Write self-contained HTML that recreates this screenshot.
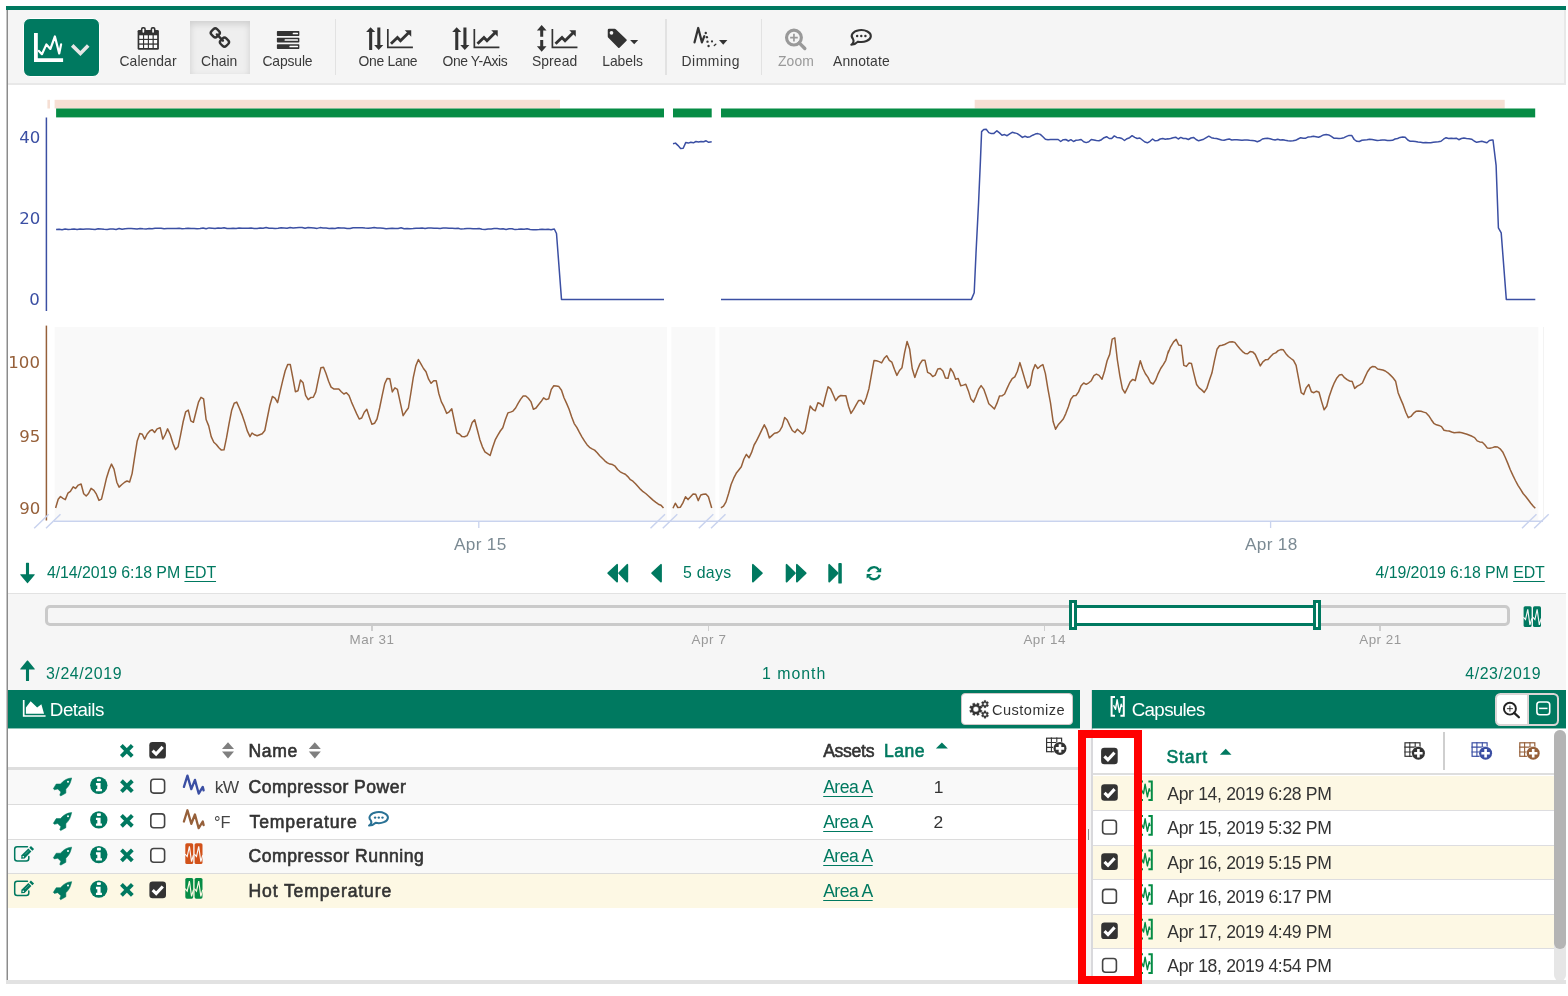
<!DOCTYPE html>
<html lang="en"><head><meta charset="utf-8"><title>Workbench</title><style>
html,body{margin:0;padding:0;background:#fff;}
body{width:1568px;height:996px;position:relative;overflow:hidden;font-family:"Liberation Sans",Arial,sans-serif;}
#app div,#app svg,#app .t{position:absolute;box-sizing:border-box;}
#app svg{overflow:visible;}
#app{will-change:transform;}
.t{white-space:pre;}
u{text-decoration-thickness:1.3px;text-underline-offset:2.5px;}
</style></head>
<body><div id="app" style="left:0;top:0;width:1568px;height:996px">
<div style="left:6px;top:6px;width:1560px;height:4px;background:#007960"></div>
<div style="left:6px;top:10px;width:1px;height:970px;background:#c6c6c6"></div>
<div style="left:7px;top:10px;width:1px;height:971px;background:#8c8c8c"></div>
<div style="left:8px;top:10px;width:1558px;height:74.5px;background:#f5f5f5;border-bottom:2px solid #e8e8e8;border-right:2px solid #e8e8e8"></div>
<div style="left:23.3px;top:17.9px;width:77px;height:59px;background:#007960;border-radius:7px;border:1px solid #fff"></div>
<svg style="left:24px;top:19px;" width="76" height="57" viewBox="24 19 76 57"><path d="M34 33.1V62H63.1V58.2H37.8V33.1Z" fill="#fff"/><polyline points="38.9,50.9 41.9,54.2 46.4,44.4 50.4,48.9 54.9,36.5 59.2,53.5 61.1,44.4" stroke="#fff" stroke-width="2.2" fill="none" stroke-linejoin="round" stroke-linecap="round"/><polyline points="72.2,45.4 80.4,53.5 88.2,45.4" stroke="#e6e6e6" stroke-width="3.6" fill="none"/></svg>
<div style="left:190px;top:21px;width:59.5px;height:52.5px;background:#efefef;box-shadow:inset 0 3px 7px rgba(0,0,0,.14);"></div>
<div style="left:334.75px;top:19px;width:1.5px;height:56px;background:#e2e2e2"></div>
<div style="left:665.05px;top:19px;width:1.5px;height:56px;background:#e2e2e2"></div>
<div style="left:760.65px;top:19px;width:1.5px;height:56px;background:#e2e2e2"></div>
<svg style="left:100px;top:15px;" width="800" height="60" viewBox="100 15 800 60"><g transform="translate(125 20) scale(0.07651)"><rect x="165" y="130" width="278" height="260" rx="18" fill="#333"/><rect x="187" y="200" width="48" height="46" fill="#fff"/><rect x="187" y="261" width="48" height="45" fill="#fff"/><rect x="187" y="323" width="48" height="43" fill="#fff"/><rect x="250" y="200" width="48" height="46" fill="#fff"/><rect x="250" y="261" width="48" height="45" fill="#fff"/><rect x="250" y="323" width="48" height="43" fill="#fff"/><rect x="313" y="200" width="47" height="46" fill="#fff"/><rect x="313" y="261" width="47" height="45" fill="#fff"/><rect x="313" y="323" width="47" height="43" fill="#fff"/><rect x="376" y="200" width="44" height="46" fill="#fff"/><rect x="376" y="261" width="44" height="45" fill="#fff"/><rect x="376" y="323" width="44" height="43" fill="#fff"/><rect x="208" y="90" width="64" height="90" rx="26" fill="#333"/><rect x="229" y="112" width="22" height="56" rx="10" fill="#fff"/><rect x="335" y="90" width="64" height="90" rx="26" fill="#333"/><rect x="356" y="112" width="22" height="56" rx="10" fill="#fff"/></g><g transform="translate(125 20) scale(0.07651)"><rect x="1129" y="117" width="102" height="102" rx="33" transform="rotate(45 1180 168)" fill="none" stroke="#333" stroke-width="31"/><rect x="1249" y="239" width="102" height="102" rx="33" transform="rotate(45 1300 290)" fill="none" stroke="#333" stroke-width="31"/><path d="M1200 188L1280 270" stroke="#333" stroke-width="31" stroke-linecap="round"/></g><g transform="translate(270 15) scale(0.05102)"><rect x="135" y="315" width="440" height="95" rx="14" fill="#333"/><rect x="445" y="347.5" width="105" height="30" rx="12" fill="#fff"/><rect x="135" y="445" width="440" height="92" rx="14" fill="#333"/><rect x="285" y="476.0" width="265" height="30" rx="12" fill="#fff"/><rect x="135" y="572" width="440" height="93" rx="14" fill="#333"/><rect x="380" y="603.5" width="170" height="30" rx="12" fill="#fff"/></g><g transform="translate(355 15) scale(0.05102)"><path d="M305 238L396 332H337V685H277V332H218Z" fill="#333"/><path d="M437 245H497V590H555L465 687L376 590H437Z" fill="#333"/></g><g transform="translate(355 15) scale(0.05102)"><path d="M627 272H660V618H1135V650H627Z" fill="#333"/><polyline points="705,565 832,440 892,505 1045,352" stroke="#333" stroke-width="56" fill="none"/><path d="M975 298H1102V425L1060 380Z" fill="#333"/></g><g transform="translate(441.1 15) scale(0.05102)"><path d="M305 238L396 332H337V685H277V332H218Z" fill="#333"/><path d="M437 245H497V590H555L465 687L376 590H437Z" fill="#333"/></g><g transform="translate(441.5 15) scale(0.05102)"><path d="M627 272H660V618H1135V650H627Z" fill="#333"/><polyline points="705,565 832,440 892,505 1045,352" stroke="#333" stroke-width="56" fill="none"/><path d="M975 298H1102V425L1060 380Z" fill="#333"/></g><g transform="translate(525 15) scale(0.05102)"><path d="M327 198L422 302H357V428H298V302H233Z" fill="#333"/><path d="M298 490H357V613H422L327 722L233 613H298Z" fill="#333"/></g><g transform="translate(519.55 15) scale(0.05102)"><path d="M627 272H660V618H1135V650H627Z" fill="#333"/><polyline points="705,565 832,440 892,505 1045,352" stroke="#333" stroke-width="56" fill="none"/><path d="M975 298H1102V425L1060 380Z" fill="#333"/></g><g transform="translate(595 15) scale(0.05102)"><path d="M250 295a25 25 0 0 1 25 -25H385a40 40 0 0 1 28 12L618 480a18 18 0 0 1 0 25L480 640a18 18 0 0 1 -25 0L262 447a40 40 0 0 1 -12 -28Z" fill="#333"/><circle cx="323" cy="350" r="36" fill="#f5f5f5"/><path d="M688 490H847L768 572Z" fill="#333"/></g><g transform="translate(675 15) scale(0.05102)"><polyline points="383,535 455,255 527,535 575,415" stroke="#333" stroke-width="44" fill="none" stroke-linecap="round" stroke-linejoin="round"/><circle cx="603" cy="352" r="23" fill="#333"/><circle cx="625" cy="435" r="23" fill="#333"/><circle cx="637" cy="523" r="23" fill="#333"/><circle cx="658" cy="607" r="23" fill="#333"/><circle cx="725" cy="518" r="21" fill="#333"/><path d="M770 598L800 572" stroke="#333" stroke-width="26" stroke-linecap="round"/><path d="M863 492H1027L945 582Z" fill="#333"/></g><g transform="translate(770 15) scale(0.07651)"><circle cx="313" cy="295" r="97" fill="none" stroke="#999" stroke-width="41"/><path d="M382 364L455 437" stroke="#999" stroke-width="44" stroke-linecap="round"/><path d="M263 295H363M313 245V345" stroke="#999" stroke-width="22"/></g><g transform="translate(770 15) scale(0.07651)"><path d="M1150.2 348.3A125 78 0 1 0 1084.7 314.0Q1107.2 357.7 1061.8 388.9Q1120.2 383.4 1150.2 348.3Z" fill="none" stroke="#333" stroke-width="27" stroke-linejoin="round"/><circle cx="1139" cy="275" r="16" fill="#333"/><circle cx="1193" cy="275" r="16" fill="#333"/><circle cx="1247" cy="275" r="16" fill="#333"/></g></svg>
<span class="t" style="left:119.40px;top:55px;font-size:13.9px;line-height:13.9px;color:#3a3a3a;letter-spacing:0.114px;">Calendar</span>
<span class="t" style="left:201.00px;top:55px;font-size:13.9px;line-height:13.9px;color:#3a3a3a;">Chain</span>
<span class="t" style="left:262.40px;top:55px;font-size:13.9px;line-height:13.9px;color:#3a3a3a;letter-spacing:-0.133px;">Capsule</span>
<span class="t" style="left:358.45px;top:55px;font-size:13.9px;line-height:13.9px;color:#3a3a3a;letter-spacing:-0.271px;">One Lane</span>
<span class="t" style="left:442.55px;top:55px;font-size:13.9px;line-height:13.9px;color:#3a3a3a;letter-spacing:-0.389px;">One Y-Axis</span>
<span class="t" style="left:531.90px;top:55px;font-size:13.9px;line-height:13.9px;color:#3a3a3a;letter-spacing:0.120px;">Spread</span>
<span class="t" style="left:602.30px;top:55px;font-size:13.9px;line-height:13.9px;color:#3a3a3a;letter-spacing:-0.080px;">Labels</span>
<span class="t" style="left:681.40px;top:55px;font-size:13.9px;line-height:13.9px;color:#3a3a3a;letter-spacing:0.567px;">Dimming</span>
<span class="t" style="left:778.00px;top:55px;font-size:13.9px;line-height:13.9px;color:#999;letter-spacing:0.133px;">Zoom</span>
<span class="t" style="left:833.00px;top:55px;font-size:13.9px;line-height:13.9px;color:#3a3a3a;letter-spacing:0.143px;">Annotate</span>
<svg style="left:8px;top:90px;" width="1558" height="450" viewBox="8 90 1558 450"><rect x="47.4" y="99.8" width="2.6" height="8.7" fill="#f6dfd4"/><rect x="54.6" y="99.8" width="505.4" height="8.7" fill="#f6dfd4"/><rect x="974.7" y="99.8" width="530" height="8.7" fill="#f6dfd4"/><rect x="56.1" y="108.5" width="607.9" height="8.9" fill="#068c45"/><rect x="673" y="108.5" width="38.7" height="8.9" fill="#068c45"/><rect x="721" y="108.5" width="814.2" height="8.9" fill="#068c45"/><rect x="54.6" y="327" width="612.4" height="193.3" fill="#f9f9f9"/><rect x="671.4" y="327" width="43.9" height="193.3" fill="#f9f9f9"/><rect x="719.4" y="327" width="819" height="193.3" fill="#f9f9f9"/><rect x="1543" y="327" width="1" height="193" fill="#f3f3f3"/><path d="M46.4 117.5V311" stroke="#3b4fa3" stroke-width="1.5"/><path d="M46.4 325.6V520.5" stroke="#96603a" stroke-width="1.5"/><path d="M54 521.3H1543" stroke="#c9d3ee" stroke-width="1.5"/><path d="M478.8 521V528M1270.6 521V528" stroke="#c9d3ee" stroke-width="1.3"/><path d="M34.2 528.2L48.7 514.2" stroke="#c9d3ee" stroke-width="1.5"/><path d="M46.0 528.2L60.5 514.2" stroke="#c9d3ee" stroke-width="1.5"/><path d="M650.5 528.2L665.0 514.2" stroke="#c9d3ee" stroke-width="1.5"/><path d="M662.8 528.2L677.3 514.2" stroke="#c9d3ee" stroke-width="1.5"/><path d="M698.8 528.2L713.3 514.2" stroke="#c9d3ee" stroke-width="1.5"/><path d="M711 528.2L725.5 514.2" stroke="#c9d3ee" stroke-width="1.5"/><path d="M1522 528.2L1536.5 514.2" stroke="#c9d3ee" stroke-width="1.5"/><path d="M1534.2 528.2L1548.7 514.2" stroke="#c9d3ee" stroke-width="1.5"/><path d="M56.1 229.4 L59.1 229.2 L62.1 229.7 L65.1 229.1 L68.1 229.5 L71.1 229.3 L74.1 229 L77.1 229.4 L80.1 228.9 L83.1 229.3 L86.1 228.9 L89.1 228.9 L92.1 229.2 L95.1 229.5 L98.1 228.8 L101.1 228.9 L104.1 229.3 L107.1 229.5 L110.1 229.1 L113.1 228.9 L116.1 229.5 L119.1 228.5 L122.1 229.3 L125.1 228.7 L128.1 228.5 L131.1 228.5 L134.1 228.7 L137.1 229.1 L140.1 228.5 L143.1 228.8 L146.1 228.9 L149.1 228.6 L152.1 228.7 L155.1 228.2 L158.1 228.2 L161.1 228.3 L164.1 228.8 L167.1 228.5 L170.1 228.4 L173.1 228.6 L176.1 228.5 L179.1 228.3 L182.1 228.8 L185.1 228.6 L188.1 228.2 L191.1 228.5 L194.1 228.4 L197.1 228.7 L200.1 228.6 L203.1 228.1 L206.1 228.8 L209.1 227.9 L212.1 228.2 L215.1 228.5 L218.1 227.9 L221.1 228.2 L224.1 227.7 L227.1 228.4 L230.1 228.4 L233.1 228.2 L236.1 228.5 L239.1 228 L242.1 228.3 L245.1 228.2 L248.1 228.2 L251.1 228.1 L254.1 228.4 L257.1 228.5 L260.1 228 L263.1 228.2 L266.1 227.6 L269.1 228.2 L272.1 228.2 L275.1 228.5 L278.1 228.3 L281.1 227.8 L284.1 227.9 L287.1 228.2 L290.1 227.5 L293.1 228 L296.1 227.7 L299.1 227.6 L302.1 227.6 L305.1 228.3 L308.1 227.6 L311.1 227.7 L314.1 227.9 L317.1 228.4 L320.1 227.6 L323.1 228 L326.1 228.1 L329.1 228.4 L332.1 228.3 L335.1 228.4 L338.1 227.8 L341.1 228 L344.1 227.9 L347.1 228.4 L350.1 228.5 L353.1 227.7 L356.1 227.8 L359.1 227.8 L362.1 227.8 L365.1 228.1 L368.1 228.2 L371.1 227.9 L374.1 227.6 L377.1 228.1 L380.1 228 L383.1 228.3 L386.1 228.7 L389.1 228.4 L392.1 228.2 L395.1 228.4 L398.1 228.4 L401.1 227.8 L404.1 228.7 L407.1 228.6 L410.1 228.7 L413.1 228.6 L416.1 228.3 L419.1 228.3 L422.1 228 L425.1 228.6 L428.1 228 L431.1 228 L434.1 228.2 L437.1 228.2 L440.1 228.4 L443.1 228.1 L446.1 228.1 L449.1 228.3 L452.1 228.2 L455.1 228.5 L458.1 228.2 L461.1 229.1 L464.1 228.8 L467.1 228.4 L470.1 228.5 L473.1 228.7 L476.1 228.7 L479.1 228.5 L482.1 229.2 L485.1 229.4 L488.1 228.9 L491.1 228.9 L494.1 228.6 L497.1 228.6 L500.1 228.9 L503.1 228.8 L506.1 229.4 L509.1 228.8 L512.1 228.7 L515.1 229.6 L518.1 229.3 L521.1 228.9 L524.1 229.3 L527.1 228.8 L530.1 229.4 L533.1 229.8 L536.1 229.8 L539.1 229.6 L542.1 229.2 L545.1 229.4 L548.1 229.2 L551.1 229.8 L554.3 229 L556.5 233.5 L561.5 299.4 L664 299.4" fill="none" stroke="#3b4fa3" stroke-width="1.5" stroke-linejoin="round"/><path d="M673 143.8 L675.5 143.1 L678.1 145.6 L680.6 148.4 L683.2 148.2 L685.7 142.6 L688.3 143.1 L690.8 142.3 L693.4 142.8 L695.9 141.5 L698.5 142 L701 141.5 L703.6 141.8 L706.1 140.8 L708.7 142.3 L711.7 141.8" fill="none" stroke="#3b4fa3" stroke-width="1.5" stroke-linejoin="round"/><path d="M721 299.4 L971.4 299.4 L974.2 292.8 L976 253.3 L978.6 202.2 L980.4 161.4 L981.6 131.6 L983.7 129.5 L986.2 129.3 L988.8 132.6 L991.3 133.6 L993.9 133.4 L996.9 130.8 L999.5 132.9 L1002 135.2 L1004.6 134.6 L1007.1 135.7 L1009.7 133.9 L1012.2 132.3 L1014.8 132.9 L1017.3 133.6 L1019.9 135.4 L1022.4 137.4 L1025 136.2 L1027.6 137.2 L1030.1 136.7 L1032.7 135.2 L1035.2 134.1 L1037.8 133.6 L1040.3 134.4 L1042.9 136.7 L1045.4 139.2 L1048 139.7 L1050.5 139.5 L1053.1 139.5 L1055.6 139.5 L1058.2 139.5 L1060.7 141.5 L1063.3 139.7 L1065.8 139.5 L1068.4 141 L1070.9 139.7 L1073.5 141.5 L1076 140.3 L1078.6 140 L1081.1 139.5 L1083.7 141.8 L1086.2 142.6 L1088.8 141.8 L1091.3 139.5 L1093.9 140 L1096.4 140.5 L1099 140.8 L1101.5 139.7 L1104.1 137.7 L1106.6 136.7 L1109.2 138.5 L1111.7 138.5 L1114.3 135.9 L1116.8 137.4 L1119.4 137.7 L1121.9 138.5 L1124.5 140.5 L1127 138.7 L1129.6 137.7 L1132.1 135.7 L1134.7 137.4 L1137.2 138.5 L1139.8 138 L1142.3 140 L1144.9 142 L1147.4 142.8 L1150 141.3 L1152.6 139 L1155.1 140.8 L1157.7 140.5 L1160.2 139 L1162.8 138.5 L1165.3 139.2 L1167.9 138.7 L1168 139 L1170.6 138.5 L1173.1 137.7 L1175.7 137.2 L1178.2 139 L1180.8 137.4 L1183.3 138.5 L1185.9 138.5 L1188.4 139.5 L1191 138 L1193.5 137.4 L1196.1 139.5 L1198.6 140.8 L1201.2 140 L1203.7 139.2 L1206.3 137.7 L1208.8 136.2 L1211.4 137.7 L1213.9 138.2 L1216.5 138.5 L1219 139.2 L1221.6 140 L1224.1 140.3 L1226.7 139.5 L1229.2 139 L1231.8 140 L1234.3 139.7 L1236.9 139.7 L1239.4 140 L1242 140.3 L1244.5 140 L1247.1 140 L1249.6 140.3 L1252.2 140.5 L1254.7 140.8 L1257.3 141.8 L1259.8 140.8 L1262.4 139 L1264.9 138.5 L1267.5 138.2 L1270 138.7 L1272.6 139.5 L1275.1 140 L1277.7 139.2 L1280.2 140 L1282.8 139.7 L1285.3 140.3 L1287.9 140.8 L1290.4 141 L1293 140.8 L1295.6 140.3 L1298.1 139 L1300.7 137.7 L1303.2 138.2 L1305.8 138.2 L1308.3 136.9 L1310.9 136.7 L1313.4 136.2 L1316 136.7 L1318.5 137.2 L1321.1 136.2 L1323.6 134.9 L1326.2 134.6 L1328.7 134.9 L1331.3 136.4 L1333.8 138.2 L1336.4 138.2 L1338.9 138.5 L1341.5 138.2 L1344 137.7 L1346.6 136.4 L1349.1 135.4 L1351.7 135.4 L1354.2 139.5 L1356.8 141.3 L1359.3 141.5 L1361.9 140.3 L1364.4 140 L1367 139.7 L1369.5 139.2 L1372.1 139.5 L1374.6 140 L1377.2 140.5 L1379.7 140.3 L1382.3 140 L1384.8 140 L1387.4 140.5 L1389.9 140.5 L1392.5 140.3 L1395 139 L1397.6 138.5 L1400.1 137.4 L1402.7 136.9 L1405.2 137.2 L1407.8 140 L1410.3 141.3 L1412.9 141.3 L1415.4 141.5 L1418 142 L1420.6 142.3 L1423.1 142.8 L1425.7 142.6 L1428.2 142.8 L1430.8 142.8 L1433.3 142.3 L1435.9 142 L1438.4 141.8 L1441 141.3 L1443.5 139.2 L1446.1 137.7 L1448.6 138.5 L1451.2 138.2 L1453.7 138.5 L1456.3 138.2 L1458.8 139.7 L1461.4 138.5 L1463.9 138 L1466.5 138.5 L1469 138.7 L1471.6 139.2 L1474.1 141 L1476.7 142.3 L1479.2 141.8 L1481.8 141.3 L1484.3 142 L1486.9 142.8 L1489.4 140.5 L1492 140 L1493 140 L1496.1 165.3 L1498.4 227.8 L1501.2 232.9 L1506.3 299.4 L1535.3 299.4" fill="none" stroke="#3b4fa3" stroke-width="1.5" stroke-linejoin="round"/><path d="M55.6 508 L58.2 499.3 L60.5 496.5 L63 498.3 L65.3 499.6 L67.9 493.2 L70.4 491.4 L73.2 486.8 L75.5 488.4 L78.3 485.1 L81.1 484 L83.7 493.7 L86.2 496 L88.5 493.5 L91.1 488.4 L93.9 490.4 L96.4 494.2 L99 500.4 L101.5 499.1 L104.1 488.4 L106.6 477.7 L109.2 469.5 L111.5 464.1 L114 469.2 L116.8 482.2 L119.1 487.1 L121.9 484.5 L125 482 L127 481 L129.6 482 L132.1 473.6 L134.7 456.7 L137.2 440.9 L139.8 433.5 L142.3 434.3 L144.6 439.1 L147.2 434 L150 430.7 L152.3 429.7 L154.6 432.5 L157.1 428.9 L160.2 427.7 L162.8 439.1 L165.3 434.5 L167.6 428.9 L170.2 434.5 L173 443.5 L175.5 449.6 L178.1 446.8 L180.6 434.8 L183.2 421.5 L185.7 411.8 L188.3 410.1 L190.8 420.8 L193.4 422.3 L195.9 412.3 L198.5 402.1 L201 397.3 L203.6 398.8 L206.1 419.5 L208.7 425.9 L211.2 436.6 L213.8 442.2 L216.3 444.5 L218.9 447.8 L221.4 450.1 L224 449.8 L226.5 437.9 L229.1 423.3 L231.6 410.6 L234.2 403.2 L236.7 402.1 L239.3 408 L242.3 415.4 L244.9 423.1 L247.4 431.2 L250 436.6 L252 433 L254.6 434.8 L257.1 435.8 L259.7 434.8 L262.2 433.8 L264.8 430.5 L267.3 418 L269.9 405.2 L272.4 396.5 L275 398.1 L277.6 402.7 L280.1 391.7 L282.7 380.7 L285.2 370.8 L287.8 364.4 L290.3 364.6 L292.9 378.2 L295.4 391.7 L298 390.7 L300.5 379.9 L303.1 382.8 L305.6 395.3 L308.2 399.6 L310.7 397.6 L313.3 397.3 L315.8 391.9 L318.4 379.2 L320.9 367.7 L323.5 367.2 L326 373.6 L328.6 381.2 L331.1 387.1 L333.7 388.9 L336.2 389.1 L338.8 389.1 L341.3 391.7 L343.9 394 L346.4 392.7 L349 395.5 L351.5 402.1 L354.1 408 L356.6 413.6 L359.2 419 L361.7 418 L364.3 412.3 L366.8 409.3 L369.4 417.2 L371.9 424.3 L374.5 423.3 L377 419 L379.6 408 L382.1 395.8 L384.7 383.8 L387.2 378.4 L389.8 378.7 L392.3 391.9 L394.9 387.9 L397.4 389.4 L403.1 415.7 L405.6 411.8 L408.4 408 L410.7 394 L413.3 377.4 L415.8 365.9 L418.4 359.5 L420.9 363.9 L423.5 368.5 L426 371.8 L428.6 379.2 L431.1 383.3 L433.7 380.7 L436.2 380.7 L438.8 393.5 L441.3 401.6 L443.9 406.7 L446.7 413.4 L449.2 411.8 L451.8 408.8 L454.3 420.8 L456.9 433 L459.4 434 L462 436.6 L464.5 436.8 L467.1 435.6 L469.6 430.2 L472.2 422.6 L474.7 419.7 L477.3 429.7 L479.8 439.4 L482.4 446.8 L484.9 451.9 L487.5 453.7 L490.1 455.5 L492.6 447.6 L495.2 439.9 L497.7 435.3 L500.3 431 L502.8 427.7 L505.4 419.5 L507.9 412.9 L510.5 412.1 L513 411.1 L515.6 408 L518.1 403.4 L520.7 399.1 L523.2 396 L525.8 396 L528.3 398.3 L530.9 401.6 L533.4 409.3 L536 408 L538.5 404.7 L541.1 401.6 L543.6 397.8 L546.2 399.6 L548.7 398.8 L551.3 389.4 L553.8 385.8 L556.4 386.1 L558.9 386.6 L561.5 390.2 L564 397.8 L566.6 403.4 L569.1 409.3 L571.7 416.9 L574.2 423.6 L576.8 427.4 L579.3 432.2 L581.9 436.8 L584.4 440.9 L587 444.7 L589.5 447.3 L592.1 448.8 L594.6 450.1 L597.2 452.7 L599.7 455.7 L602.3 458.3 L604.8 460.8 L607.4 462.9 L609.9 464.1 L612.5 464.6 L615.1 466.2 L617.6 469.5 L620.2 471.8 L622.7 473.1 L625.3 474.3 L627.8 476.6 L630.4 479.7 L632.9 481.2 L635.5 483.8 L638 486.6 L640.6 489.4 L643.1 491.7 L645.7 493.5 L648.2 495.8 L650.8 498.1 L653.3 500.4 L655.9 502.4 L658.4 504.2 L661 505.2 L663.5 508" fill="none" stroke="#96603a" stroke-width="1.5" stroke-linejoin="round"/><path d="M673 508.3 L675.3 503.2 L677.8 507.5 L680.4 507.2 L682.9 502.9 L685.5 496.8 L688 499.6 L690.6 496.8 L693.1 494 L695.7 494.2 L698.2 500.6 L700.8 495 L703.3 494.2 L705.9 494 L708.4 496.8 L711.7 508" fill="none" stroke="#96603a" stroke-width="1.5" stroke-linejoin="round"/><path d="M720.9 507.8 L723.5 506.2 L726 501.9 L728.6 493.5 L731.1 484.5 L733.7 478.2 L736.2 473.3 L738.8 470 L741.3 466.7 L743.9 459 L746.4 454.4 L749 457.8 L751.5 452.7 L754.1 445 L756.6 440.7 L759.2 435.3 L761.7 430.2 L764.3 424.8 L766.8 429.7 L769.4 437.9 L771.9 435.6 L774.5 433.3 L777 432.8 L779.6 431 L782.1 426.6 L784.7 417.4 L787.2 420 L789.8 425.6 L792.3 430.5 L794.9 432.5 L797.4 429.2 L802.6 434 L805.1 431 L807.7 418.2 L810.2 406 L812.8 409.3 L815.3 410.8 L817.9 402.7 L820.4 403.7 L823 406.5 L825.5 396.5 L828.1 386.8 L830.6 388.9 L833.2 394.7 L835.7 400.6 L838.3 397 L840.8 395.5 L843.4 395.8 L845.9 395.8 L848.5 406.2 L851 413.4 L853.6 409.3 L856.1 404.9 L858.7 400.4 L861.2 400.6 L863.8 404.2 L866.3 397.8 L868.9 388.9 L871.4 374.8 L874 360.6 L876.5 360.8 L879.1 361.6 L881.6 362.9 L884.2 358.3 L886.7 355.7 L889.3 360.3 L891.8 362.1 L894.4 369.2 L896.9 375.4 L899.5 370.5 L902 367.7 L904.6 352.7 L907.1 341.4 L909.7 349.3 L912.2 368.5 L914.8 377.4 L917.3 370.3 L919.9 363.9 L922.4 360.3 L925 360.3 L927.6 372.3 L930.1 373.6 L932.7 376.6 L935.2 375.1 L937.8 369 L940.3 368.5 L942.9 371 L945.4 377.9 L948 378.2 L950.5 368.5 L953.1 372.3 L955.6 379.2 L958.2 378.4 L960.7 385.8 L963.3 385.1 L965.8 384.3 L968.4 390.9 L970.9 399.1 L973.5 402.1 L976 396.5 L978.6 389.4 L981.1 385.6 L983.7 389.1 L986.2 396 L988.8 403.7 L991.3 406 L994.4 409 L996.9 403.4 L999.5 396 L1002 395.8 L1004.6 394 L1007.1 388.4 L1009.7 382.8 L1012.2 378.7 L1014.8 376.9 L1017.3 371.5 L1019.9 362.6 L1022.4 371 L1025 379.9 L1027.6 388.1 L1030.1 385.1 L1032.7 371 L1035.2 364.6 L1037.8 368.5 L1040.3 366.2 L1042.9 364.6 L1045.4 373.6 L1048 389.4 L1050.5 402.9 L1053.1 421.5 L1055.6 429.2 L1058.2 424.8 L1060.7 422 L1063.3 419 L1065.8 413.6 L1068.4 406.7 L1070.9 399.1 L1073.5 395.8 L1076 395.5 L1078.6 391.9 L1081.1 385.8 L1083.7 383 L1086.2 384.3 L1088.8 382.8 L1091.3 380.7 L1093.9 375.6 L1096.4 374.1 L1099 375.4 L1102 379.2 L1104.6 371 L1107.1 360.8 L1109.7 354.4 L1112.2 339.1 L1114.8 337.9 L1117.3 359.5 L1119.9 376.1 L1122.4 388.9 L1125 393 L1127.6 387.6 L1130.1 382 L1132.7 379.4 L1135.2 380.7 L1137.8 370.3 L1140.3 360.8 L1142.9 368.5 L1145.4 373.8 L1148 377.4 L1150.5 382.5 L1153.1 384 L1155.6 380.2 L1158.2 373.6 L1160.7 368.5 L1163.3 364.6 L1165.8 360.3 L1168.4 351.1 L1168 353.2 L1170.6 346.8 L1173.6 341.9 L1176.2 339.4 L1178.7 345 L1181.3 345.5 L1183.8 365.4 L1186.4 366.4 L1188.9 363.1 L1191.5 363.6 L1194 374.1 L1196.6 384.5 L1199.1 387.9 L1201.7 389.9 L1204.2 392.4 L1206.8 388.4 L1209.3 380.5 L1211.9 373.1 L1214.4 360.8 L1217 349.3 L1219.5 345.8 L1222.1 345.3 L1224.6 344.5 L1227.2 343.2 L1229.7 341.9 L1232.3 341.7 L1234.8 342.4 L1237.4 345.8 L1239.9 348.8 L1242.5 351.6 L1245 353.4 L1247.6 353.7 L1250.1 351.6 L1252.7 351.9 L1255.2 354.4 L1257.8 360.1 L1260.3 365.9 L1262.9 361.8 L1265.4 359.8 L1268 359.5 L1270.6 356.5 L1273.1 353.9 L1275.7 352.9 L1278.2 350.6 L1280.8 349.6 L1283.3 349.8 L1285.9 353.7 L1288.4 356.5 L1291 358.5 L1293.5 360.3 L1296.1 365.4 L1298.6 378.7 L1301.2 392.7 L1303.7 394.5 L1306.3 387.6 L1308.8 384.5 L1311.4 391.7 L1313.9 392.7 L1316.5 391.2 L1319 392.2 L1321.6 401.6 L1324.1 409.8 L1326.7 406.2 L1329.2 396.5 L1331.8 388.9 L1334.3 382.8 L1336.9 377.9 L1339.4 375.1 L1342 374.6 L1344.5 377.7 L1347.1 379.7 L1349.6 381 L1352.2 381.5 L1354.7 388.4 L1357.3 386.1 L1359.8 384.8 L1362.4 383 L1364.9 377.4 L1367.5 371.8 L1370 368.2 L1372.6 366.4 L1375.1 366.7 L1377.7 369 L1380.2 369.5 L1382.8 370 L1385.3 371 L1387.9 372.8 L1390.4 375.1 L1393 377.7 L1395.6 381.2 L1398.1 392.7 L1400.7 399.1 L1403.2 404.9 L1405.8 412.3 L1408.3 417.7 L1410.9 416.4 L1413.4 413.4 L1416 411.3 L1418.5 411.1 L1421.1 411.3 L1423.6 412.1 L1426.2 412.9 L1428.7 415.7 L1431.3 419.7 L1433.8 423.3 L1436.4 424.8 L1438.9 425.4 L1441.5 426.6 L1444 430.2 L1446.6 430.7 L1449.1 431 L1451.7 432 L1454.2 432.8 L1456.8 432.5 L1459.3 432.2 L1461.9 432.8 L1464.4 433.5 L1467 434.3 L1469.5 435.3 L1472.1 436.3 L1474.6 437.6 L1477.2 440.9 L1479.7 441.9 L1482.3 442.2 L1484.8 444.7 L1487.4 448.1 L1489.9 448.3 L1492.5 447.6 L1495 446.8 L1497.6 447 L1500.1 448.8 L1502.7 451.9 L1505.2 457.2 L1507.8 463.4 L1510.3 469.7 L1512.9 475.4 L1515.4 480.5 L1518 485.3 L1520.6 489.4 L1523.1 493.5 L1525.7 496.5 L1528.2 499.8 L1530.8 503.2 L1533.3 506.2 L1535.3 508.3" fill="none" stroke="#96603a" stroke-width="1.5" stroke-linejoin="round"/></svg>
<span class="t" style="left:19.30px;top:130px;font-size:16.6px;line-height:16.6px;color:#3b4fa3;font-family:'DejaVu Sans', 'Liberation Sans', sans-serif;">40</span>
<span class="t" style="left:19.30px;top:211px;font-size:16.6px;line-height:16.6px;color:#3b4fa3;font-family:'DejaVu Sans', 'Liberation Sans', sans-serif;">20</span>
<span class="t" style="left:29.30px;top:292px;font-size:16.6px;line-height:16.6px;color:#3b4fa3;font-family:'DejaVu Sans', 'Liberation Sans', sans-serif;">0</span>
<span class="t" style="left:8.30px;top:355px;font-size:16.6px;line-height:16.6px;color:#96603a;font-family:'DejaVu Sans', 'Liberation Sans', sans-serif;">100</span>
<span class="t" style="left:19.30px;top:429px;font-size:16.6px;line-height:16.6px;color:#96603a;font-family:'DejaVu Sans', 'Liberation Sans', sans-serif;">95</span>
<span class="t" style="left:19.30px;top:501px;font-size:16.6px;line-height:16.6px;color:#96603a;font-family:'DejaVu Sans', 'Liberation Sans', sans-serif;">90</span>
<span class="t" style="left:454.00px;top:536px;font-size:17.2px;line-height:17.2px;color:#7b8a93;letter-spacing:0.320px;">Apr 15</span>
<span class="t" style="left:1245.00px;top:536px;font-size:17.2px;line-height:17.2px;color:#7b8a93;letter-spacing:0.320px;">Apr 18</span>
<svg style="left:8px;top:556px;" width="1558" height="34" viewBox="8 556 1558 34"><path transform="translate(20 562.7)" d="M6.5 0h2a.55 .55 0 0 1 .55 .55V11.6h5.3a.4 .4 0 0 1 .3 .7L7.9 20.4a.55 .55 0 0 1 -.8 0L.35 12.3a.4 .4 0 0 1 .3 -.7H5.95V.55a.55 .55 0 0 1 .55 -.55Z" fill="#007960"/><path d="M608.2 573.15L617.1 564.8V581.5Z" fill="#007960" stroke="#007960" stroke-width="1.8" stroke-linejoin="round"/><path d="M619.1 573.15L627.3 564.8V581.5Z" fill="#007960" stroke="#007960" stroke-width="1.8" stroke-linejoin="round"/><path d="M652.1 573.15L661 564.8V581.5Z" fill="#007960" stroke="#007960" stroke-width="1.8" stroke-linejoin="round"/><path d="M761.9 573.15L752.9 564.8V581.5Z" fill="#007960" stroke="#007960" stroke-width="1.8" stroke-linejoin="round"/><path d="M794.9 573.15L786.6 564.8V581.5Z" fill="#007960" stroke="#007960" stroke-width="1.8" stroke-linejoin="round"/><path d="M805.7 573.15L796.9 564.8V581.5Z" fill="#007960" stroke="#007960" stroke-width="1.8" stroke-linejoin="round"/><path d="M837.7 573.15L829.2 564.8V581.5Z" fill="#007960" stroke="#007960" stroke-width="1.8" stroke-linejoin="round"/><rect x="838.3" y="563" width="3.5" height="20.6" rx="0.9" fill="#007960"/><path d="M868.10 571.65A6.0 6.0 0 0 1 878.81 569.76" fill="none" stroke="#007960" stroke-width="2.3"/><path d="M879.70 574.75A6.0 6.0 0 0 1 868.99 576.64" fill="none" stroke="#007960" stroke-width="2.3"/><path d="M881.20 567.80V572.30H875.50Z" fill="#007960"/><path d="M866.60 578.60V574.10H872.30Z" fill="#007960"/></svg>
<span class="t" style="left:46.90px;top:565px;font-size:15.9px;line-height:15.9px;color:#007960;letter-spacing:-0.065px;">4/14/2019 6:18 PM <u>EDT</u></span>
<span class="t" style="left:682.90px;top:565px;font-size:15.9px;line-height:15.9px;color:#007960;letter-spacing:0.280px;">5 days</span>
<span class="t" style="left:1375.60px;top:565px;font-size:15.9px;line-height:15.9px;color:#007960;letter-spacing:-0.065px;">4/19/2019 6:18 PM <u>EDT</u></span>
<div style="left:8px;top:593px;width:1558px;height:97px;background:#f6f6f6;border-top:1.5px solid #e2e2e2"></div>
<div style="left:45px;top:605px;width:1465px;height:21px;border:3px solid #cacaca;border-radius:5px;background:#f6f6f6"></div>
<div style="left:1072px;top:604.7px;width:245px;height:21.3px;background:#fff;border-top:3.2px solid #007960;border-bottom:3.2px solid #007960"></div>
<div style="left:1068.5px;top:600px;width:8px;height:30px;background:#fff;border:3px solid #007960"></div>
<div style="left:1313px;top:600px;width:8px;height:30px;background:#fff;border:3px solid #007960"></div>
<svg style="left:1520px;top:600px;" width="30" height="32" viewBox="1520 600 30 32"><rect x="1523.6" y="606.2" width="8" height="20.9" rx="1.6" fill="#007960"/><polyline points="1523.4,617.068 1525.52,619.576 1527.76,609.335 1529.92,624.801 1531.8,618.322" fill="none" stroke="#f6f6f6" stroke-width="1.15" stroke-linejoin="miter"/><rect x="1533" y="606.2" width="8" height="20.9" rx="1.6" fill="#007960"/><polyline points="1532.8,617.068 1534.92,619.576 1537.16,609.335 1539.32,624.801 1541.2,618.322" fill="none" stroke="#f6f6f6" stroke-width="1.15" stroke-linejoin="miter"/></svg>
<div style="left:371.4px;top:626px;width:1.2px;height:4.5px;background:#cfcfcf"></div>
<span class="t" style="left:349.60px;top:633px;font-size:13.4px;line-height:13.4px;color:#999;letter-spacing:0.560px;">Mar 31</span>
<div style="left:707.6px;top:626px;width:1.2px;height:4.5px;background:#cfcfcf"></div>
<span class="t" style="left:691.45px;top:633px;font-size:13.4px;line-height:13.4px;color:#999;letter-spacing:0.625px;">Apr 7</span>
<div style="left:1043.6px;top:626px;width:1.2px;height:4.5px;background:#cfcfcf"></div>
<span class="t" style="left:1023.40px;top:633px;font-size:13.4px;line-height:13.4px;color:#999;letter-spacing:0.520px;">Apr 14</span>
<div style="left:1379.4px;top:626px;width:1.2px;height:4.5px;background:#cfcfcf"></div>
<span class="t" style="left:1359.20px;top:633px;font-size:13.4px;line-height:13.4px;color:#999;letter-spacing:0.520px;">Apr 21</span>
<svg style="left:8px;top:655px;" width="60" height="30" viewBox="8 655 60 30"><path transform="translate(20 681.0) scale(1 -1)" d="M6.5 0h2a.55 .55 0 0 1 .55 .55V11.6h5.3a.4 .4 0 0 1 .3 .7L7.9 20.4a.55 .55 0 0 1 -.8 0L.35 12.3a.4 .4 0 0 1 .3 -.7H5.95V.55a.55 .55 0 0 1 .55 -.55Z" fill="#007960"/></svg>
<span class="t" style="left:45.90px;top:666px;font-size:15.9px;line-height:15.9px;color:#007960;letter-spacing:0.625px;">3/24/2019</span>
<span class="t" style="left:761.90px;top:666px;font-size:15.9px;line-height:15.9px;color:#007960;letter-spacing:1.000px;">1 month</span>
<span class="t" style="left:1465.30px;top:666px;font-size:15.9px;line-height:15.9px;color:#007960;letter-spacing:0.575px;">4/23/2019</span>
<div style="left:8px;top:690px;width:1072.3px;height:38.2px;background:#007960"></div>
<div style="left:8px;top:728px;width:1072px;height:1px;background:rgba(0,121,96,.45)"></div>
<svg style="left:20px;top:696px;" width="30" height="24" viewBox="20 696 30 24"><g transform="translate(10 690) scale(0.07651)"><path d="M168 130H190V330H465V350H168Z" fill="#fff"/><path d="M208 312V230L270 148L355 230L410 185L445 312Z" fill="#fff"/></g></svg>
<span class="t" style="left:49.80px;top:701px;font-size:18.8px;line-height:18.8px;color:#fff;letter-spacing:-0.467px;">Details</span>
<div style="left:960.7px;top:692.9px;width:112.5px;height:32.4px;background:#fff;border:1px solid #cfc6c6;border-radius:4px"></div>
<svg style="left:966px;top:698px;" width="26" height="22" viewBox="966 698 26 22"><g transform="translate(950 688) scale(0.08929)"><path d="M360.3 252.5L350.9 275.4L333.8 268.6L321.9 280.6L328.7 297.7L305.9 307.2L298.6 290.3L281.7 290.4L274.5 307.3L251.6 297.9L258.4 280.8L246.4 268.9L229.3 275.7L219.8 252.9L236.7 245.6L236.6 228.7L219.7 221.5L229.1 198.6L246.2 205.4L258.1 193.4L251.3 176.3L274.1 166.8L281.4 183.7L298.3 183.6L305.5 166.7L328.4 176.1L321.6 193.2L333.6 205.1L350.7 198.3L360.2 221.1L343.3 228.4L343.4 245.3ZM321.0 237.0A31 31 0 1 0 259.0 237.0A31 31 0 1 0 321.0 237.0Z" fill="#333" fill-rule="evenodd" stroke="#333" stroke-width="4" stroke-linejoin="round"/><path d="M432.3 192.0L422.7 208.6L412.8 203.0L401.7 209.4L401.7 220.9L382.6 220.9L382.5 209.5L371.3 203.1L361.5 208.9L351.8 192.3L361.7 186.6L361.7 173.7L351.7 168.0L361.3 151.4L371.2 157.0L382.3 150.6L382.3 139.1L401.4 139.1L401.5 150.5L412.7 156.9L422.5 151.1L432.2 167.7L422.3 173.4L422.3 186.3ZM409.0 180.0A17 17 0 1 0 375.0 180.0A17 17 0 1 0 409.0 180.0Z" fill="#333" fill-rule="evenodd" stroke="#333" stroke-width="4" stroke-linejoin="round"/><path d="M432.3 309.0L422.7 325.6L412.8 320.0L401.7 326.4L401.7 337.9L382.6 337.9L382.5 326.5L371.3 320.1L361.5 325.9L351.8 309.3L361.7 303.6L361.7 290.7L351.7 285.0L361.3 268.4L371.2 274.0L382.3 267.6L382.3 256.1L401.4 256.1L401.5 267.5L412.7 273.9L422.5 268.1L432.2 284.7L422.3 290.4L422.3 303.3ZM409.0 297.0A17 17 0 1 0 375.0 297.0A17 17 0 1 0 409.0 297.0Z" fill="#333" fill-rule="evenodd" stroke="#333" stroke-width="4" stroke-linejoin="round"/></g></svg>
<span class="t" style="left:992.00px;top:703px;font-size:14.6px;line-height:14.6px;color:#333;letter-spacing:0.463px;">Customize</span>
<div style="left:1080.3px;top:690px;width:11.2px;height:290.2px;background:#f5f5f5"></div>
<div style="left:1087.6px;top:829px;width:1.5px;height:11px;background:#8a8a8a"></div>
<div style="left:8px;top:767.2px;width:1070px;height:2.6px;background:#dedede"></div>
<div style="left:8px;top:769.8px;width:1070px;height:34.5px;background:#f9f9f9;"></div>
<div style="left:8px;top:804.3px;width:1070px;height:34.5px;background:#fff;border-top:1.5px solid #dcdcdc;"></div>
<div style="left:8px;top:838.8px;width:1070px;height:34.5px;background:#f9f9f9;border-top:1.5px solid #dcdcdc;"></div>
<div style="left:8px;top:873.3px;width:1070px;height:34.3px;background:#fdf8e4;border-top:1.5px solid #dcdcdc;"></div>
<svg style="left:8px;top:730px;" width="1072" height="180" viewBox="8 730 1072 180"><path d="M121.35 745.45L132.25 756.35M132.25 745.45L121.35 756.35" stroke="#007960" stroke-width="3.9" stroke-linecap="butt"/><rect x="149.3" y="742" width="16.6" height="16.6" rx="3.2" fill="#333"/><path d="M152.6 750.6L156.1 754L162.7 746.9" fill="none" stroke="#fff" stroke-width="3.1"/><path d="M222 749.0L228 742.2L234 749.0Z" fill="#7f7f7f"/><path d="M222 751.6L228 758.4000000000001L234 751.6Z" fill="#7f7f7f"/><path d="M308.8 749.0L314.8 742.2L320.8 749.0Z" fill="#7f7f7f"/><path d="M308.8 751.6L314.8 758.4000000000001L320.8 751.6Z" fill="#7f7f7f"/><path d="M935.9 748.6L941.9 742.5L947.9 748.6Z" fill="#007960"/><rect x="1046.6" y="738.2" width="15" height="13.5" fill="#fff" stroke="#333" stroke-width="1.2"/><path d="M1051.40 737.6V752.3M1046 742.50H1062.2" stroke="#333" stroke-width="1.1"/><path d="M1056.80 737.6V752.3M1046 747.40H1062.2" stroke="#333" stroke-width="1.1"/><circle cx="1060" cy="748.4" r="6.95" fill="#fff"/><circle cx="1060" cy="748.4" r="6.5" fill="#333"/><path d="M1055.8 748.4H1064.2M1060 744.2V752.6" stroke="#fff" stroke-width="2.6"/><g transform="translate(8 770.8) scale(0.08929)"><path d="M713 80C700 135 690 165 648 205V250L590 282L580 272L592 238L557 203L520 212L508 200L540 148H588C625 105 660 85 713 80Z" fill="#007960" stroke="#007960" stroke-width="6" stroke-linejoin="round"/><circle cx="672" cy="122" r="11" fill="#fff"/></g><g transform="translate(8 770.8) scale(0.08929)"><circle cx="1017" cy="163" r="97" fill="#007960"/><rect x="996" y="88" width="44" height="30" rx="9" fill="#fff"/><path d="M985 138H1037V203H1052V229H985V203H1000V164H985Z" fill="#fff"/></g><path d="M121.45 780.75L132.35 791.65M132.35 780.75L121.45 791.65" stroke="#007960" stroke-width="3.9" stroke-linecap="butt"/><rect x="150.8" y="779.3" width="13.8" height="13.8" rx="3" fill="#fff" stroke="#444" stroke-width="1.6"/><g transform="translate(8 805.4) scale(0.08929)"><path d="M713 80C700 135 690 165 648 205V250L590 282L580 272L592 238L557 203L520 212L508 200L540 148H588C625 105 660 85 713 80Z" fill="#007960" stroke="#007960" stroke-width="6" stroke-linejoin="round"/><circle cx="672" cy="122" r="11" fill="#fff"/></g><g transform="translate(8 805.4) scale(0.08929)"><circle cx="1017" cy="163" r="97" fill="#007960"/><rect x="996" y="88" width="44" height="30" rx="9" fill="#fff"/><path d="M985 138H1037V203H1052V229H985V203H1000V164H985Z" fill="#fff"/></g><path d="M121.45 815.35L132.35 826.25M132.35 815.35L121.45 826.25" stroke="#007960" stroke-width="3.9" stroke-linecap="butt"/><rect x="150.8" y="813.9" width="13.8" height="13.8" rx="3" fill="#fff" stroke="#444" stroke-width="1.6"/><g transform="translate(8 840) scale(0.08929)"><path d="M713 80C700 135 690 165 648 205V250L590 282L580 272L592 238L557 203L520 212L508 200L540 148H588C625 105 660 85 713 80Z" fill="#007960" stroke="#007960" stroke-width="6" stroke-linejoin="round"/><circle cx="672" cy="122" r="11" fill="#fff"/></g><g transform="translate(8 840) scale(0.08929)"><circle cx="1017" cy="163" r="97" fill="#007960"/><rect x="996" y="88" width="44" height="30" rx="9" fill="#fff"/><path d="M985 138H1037V203H1052V229H985V203H1000V164H985Z" fill="#fff"/></g><path d="M121.45 849.95L132.35 860.85M132.35 849.95L121.45 860.85" stroke="#007960" stroke-width="3.9" stroke-linecap="butt"/><rect x="150.8" y="848.5" width="13.8" height="13.8" rx="3" fill="#fff" stroke="#444" stroke-width="1.6"/><g transform="translate(8 840) scale(0.08929)"><path d="M218 76H103a28 28 0 0 0 -28 28V207a28 28 0 0 0 28 28H205a28 28 0 0 0 28 -28V185" fill="none" stroke="#007960" stroke-width="17" stroke-linecap="round"/><path d="M150 172L228 96L262 130L186 206L148 210Z" fill="#007960"/><path d="M238 86L257 67L292 101L273 120Z" fill="#007960"/><circle cx="171" cy="187" r="9" fill="#fff"/><path d="M190 162L236 116" stroke="#fff" stroke-width="6" opacity=".55"/></g><g transform="translate(8 874.5) scale(0.08929)"><path d="M713 80C700 135 690 165 648 205V250L590 282L580 272L592 238L557 203L520 212L508 200L540 148H588C625 105 660 85 713 80Z" fill="#007960" stroke="#007960" stroke-width="6" stroke-linejoin="round"/><circle cx="672" cy="122" r="11" fill="#fff"/></g><g transform="translate(8 874.5) scale(0.08929)"><circle cx="1017" cy="163" r="97" fill="#007960"/><rect x="996" y="88" width="44" height="30" rx="9" fill="#fff"/><path d="M985 138H1037V203H1052V229H985V203H1000V164H985Z" fill="#fff"/></g><path d="M121.45 884.45L132.35 895.35M132.35 884.45L121.45 895.35" stroke="#007960" stroke-width="3.9" stroke-linecap="butt"/><rect x="149.4" y="881.6" width="16.6" height="16.6" rx="3.2" fill="#333"/><path d="M152.7 890.2L156.2 893.6L162.8 886.5" fill="none" stroke="#fff" stroke-width="3.1"/><g transform="translate(8 874.5) scale(0.08929)"><path d="M218 76H103a28 28 0 0 0 -28 28V207a28 28 0 0 0 28 28H205a28 28 0 0 0 28 -28V185" fill="none" stroke="#007960" stroke-width="17" stroke-linecap="round"/><path d="M150 172L228 96L262 130L186 206L148 210Z" fill="#007960"/><path d="M238 86L257 67L292 101L273 120Z" fill="#007960"/><circle cx="171" cy="187" r="9" fill="#fff"/><path d="M190 162L236 116" stroke="#fff" stroke-width="6" opacity=".55"/></g><g transform="translate(140 770) scale(0.07027)"><polyline points="625,240 675,80 730,272 782,140 835,335 893,240 905,290" fill="none" stroke="#3b4fa3" stroke-width="33" stroke-linejoin="round" stroke-linecap="round"/></g><g transform="translate(140 804.65) scale(0.07027)"><polyline points="625,240 675,80 730,272 782,140 835,335 893,240 905,290" fill="none" stroke="#96603a" stroke-width="33" stroke-linejoin="round" stroke-linecap="round"/></g><rect x="185.3" y="843.2" width="7.9" height="20.8" rx="1.6" fill="#d2521a"/><polyline points="185.1,854.016 187.196,856.512 189.408,846.32 191.541,861.712 193.4,855.264" fill="none" stroke="#f9f9f9" stroke-width="1.15" stroke-linejoin="miter"/><rect x="194.6" y="843.2" width="7.9" height="20.8" rx="1.6" fill="#d2521a"/><polyline points="194.4,854.016 196.496,856.512 198.708,846.32 200.841,861.712 202.7,855.264" fill="none" stroke="#f9f9f9" stroke-width="1.15" stroke-linejoin="miter"/><rect x="185.3" y="877.9" width="7.9" height="20.8" rx="1.6" fill="#068c45"/><polyline points="185.1,888.716 187.196,891.212 189.408,881.02 191.541,896.412 193.4,889.964" fill="none" stroke="#fdf8e4" stroke-width="1.15" stroke-linejoin="miter"/><rect x="194.6" y="877.9" width="7.9" height="20.8" rx="1.6" fill="#068c45"/><polyline points="194.4,888.716 196.496,891.212 198.708,881.02 200.841,896.412 202.7,889.964" fill="none" stroke="#fdf8e4" stroke-width="1.15" stroke-linejoin="miter"/><g transform="translate(0 0) scale(1.00000)"><path d="M375.7 822.8A9.2 5.5 0 1 0 370.8 820.4Q372.5 823.4 369.1 825.6Q373.4 825.2 375.7 822.8Z" fill="none" stroke="#2a7295" stroke-width="2.0" stroke-linejoin="round"/><circle cx="375.1" cy="817.6" r="1.2" fill="#2a7295"/><circle cx="378.8" cy="817.6" r="1.2" fill="#2a7295"/><circle cx="382.5" cy="817.6" r="1.2" fill="#2a7295"/></g></svg>
<span class="t" style="left:248.50px;top:743px;font-size:17.6px;line-height:17.6px;color:#333;letter-spacing:0.600px;-webkit-text-stroke:0.6px currentColor;">Name</span>
<span class="t" style="left:823.20px;top:743px;font-size:17.6px;line-height:17.6px;color:#333;letter-spacing:-0.300px;-webkit-text-stroke:0.6px currentColor;">Assets</span>
<span class="t" style="left:884.00px;top:743px;font-size:17.6px;line-height:17.6px;color:#007960;letter-spacing:0.433px;-webkit-text-stroke:0.6px currentColor;">Lane</span>
<span class="t" style="left:248.50px;top:779px;font-size:17.6px;line-height:17.6px;color:#333;letter-spacing:0.447px;-webkit-text-stroke:0.6px currentColor;">Compressor Power</span>
<span class="t" style="left:823.20px;top:779px;font-size:17.6px;line-height:17.6px;color:#007960;letter-spacing:-0.560px;"><u>Area A</u></span>
<span class="t" style="left:249.50px;top:814px;font-size:17.6px;line-height:17.6px;color:#333;letter-spacing:0.850px;-webkit-text-stroke:0.6px currentColor;">Temperature</span>
<span class="t" style="left:823.20px;top:814px;font-size:17.6px;line-height:17.6px;color:#007960;letter-spacing:-0.560px;"><u>Area A</u></span>
<span class="t" style="left:248.50px;top:848px;font-size:17.6px;line-height:17.6px;color:#333;letter-spacing:0.535px;-webkit-text-stroke:0.6px currentColor;">Compressor Running</span>
<span class="t" style="left:823.20px;top:848px;font-size:17.6px;line-height:17.6px;color:#007960;letter-spacing:-0.560px;"><u>Area A</u></span>
<span class="t" style="left:248.50px;top:883px;font-size:17.6px;line-height:17.6px;color:#333;letter-spacing:0.857px;-webkit-text-stroke:0.6px currentColor;">Hot Temperature</span>
<span class="t" style="left:823.20px;top:883px;font-size:17.6px;line-height:17.6px;color:#007960;letter-spacing:-0.560px;"><u>Area A</u></span>
<span class="t" style="left:214.80px;top:779px;font-size:17.4px;line-height:17.4px;color:#444;letter-spacing:-0.800px;">kW</span>
<span class="t" style="left:214.00px;top:814px;font-size:16.4px;line-height:16.4px;color:#444;">°F</span>
<span class="t" style="left:933.80px;top:779px;font-size:17.4px;line-height:17.4px;color:#333;">1</span>
<span class="t" style="left:933.40px;top:814px;font-size:17.4px;line-height:17.4px;color:#333;">2</span>
<div style="left:1091px;top:690px;width:2px;height:290.2px;background:#d9d9dc"></div>
<div style="left:1092.3px;top:690px;width:473.7px;height:38.3px;background:#007960"></div>
<div style="left:1092px;top:728px;width:474px;height:1px;background:rgba(0,121,96,.45)"></div>
<span class="t" style="left:1131.70px;top:701px;font-size:18.8px;line-height:18.8px;color:#fff;letter-spacing:-0.671px;">Capsules</span>
<div style="left:1494.6px;top:693px;width:64.6px;height:32.5px;background:#fff;border:2px solid #dbd5d5;border-radius:5.5px;overflow:hidden"><div style="left:30.4px;top:-2px;width:33px;height:33px;background:#007960;border-left:2px solid #dbd5d5"></div></div>
<svg style="left:1100px;top:692px;" width="466" height="34" viewBox="1100 692 466 34"><path d="M1115 697H1111.6V715.7H1115" fill="none" stroke="#fff" stroke-width="2.0"/><path d="M1120.4 697H1123.8V715.7H1120.4" fill="none" stroke="#fff" stroke-width="2.0"/><polyline points="1113.5,705.3 1115.5,709.3 1117.1,699.8 1119.4,712.4 1121.2,704.3 1122.2,707" fill="none" stroke="#fff" stroke-width="1.4" stroke-linejoin="round"/><g transform="translate(1388 688) scale(0.11481)"><circle cx="1062" cy="180" r="52" fill="none" stroke="#222" stroke-width="17"/><path d="M1099 216L1140 255" stroke="#222" stroke-width="20" stroke-linecap="round"/><path d="M1036 180H1088M1062 154V206" stroke="#222" stroke-width="8"/></g><rect x="1536.9" y="702" width="12.8" height="12.8" rx="2.8" fill="none" stroke="#fff" stroke-width="1.6"/><path d="M1539.1 708.4H1547.5" stroke="#fff" stroke-width="1.5"/></svg>
<div style="left:1092.8px;top:772.9px;width:461px;height:2.6px;background:#dedede"></div>
<div style="left:1092.8px;top:775.5px;width:461px;height:34.6px;background:#fdf8e4;"></div>
<div style="left:1092.8px;top:810.1px;width:461px;height:34.5px;background:#fff;border-top:1.5px solid #dddde0;"></div>
<div style="left:1092.8px;top:844.6px;width:461px;height:34.6px;background:#fdf8e4;border-top:1.5px solid #dddde0;"></div>
<div style="left:1092.8px;top:879.2px;width:461px;height:34.6px;background:#fff;border-top:1.5px solid #dddde0;"></div>
<div style="left:1092.8px;top:913.8px;width:461px;height:34.6px;background:#fdf8e4;border-top:1.5px solid #dddde0;"></div>
<div style="left:1092.8px;top:948.4px;width:461px;height:31.8px;background:#fff;border-top:1.5px solid #dddde0;"></div>
<div style="left:1553.6px;top:729.5px;width:12.4px;height:251px;background:#e6e6e6;border-radius:6.2px"></div>
<div style="left:1553.6px;top:729.5px;width:12.4px;height:219.5px;background:#b4b4b4;border-radius:6.2px"></div>
<div style="left:1443.2px;top:731.5px;width:1.5px;height:38.5px;background:#cfcfcf"></div>
<svg style="left:1092px;top:730px;" width="474" height="252" viewBox="1092 730 474 252"><rect x="1101.1" y="747.7" width="16.6" height="16.6" rx="3.2" fill="#333"/><path d="M1104.4 756.3L1107.9 759.7L1114.5 752.6" fill="none" stroke="#fff" stroke-width="3.1"/><path d="M1219.9 754.8L1225.7 748.8L1231.5 754.8Z" fill="#007960"/><rect x="1405" y="742.8" width="15" height="13.5" fill="#fff" stroke="#333" stroke-width="1.2"/><path d="M1409.80 742.2V756.9M1404.4 747.10H1420.6" stroke="#333" stroke-width="1.1"/><path d="M1415.20 742.2V756.9M1404.4 752.00H1420.6" stroke="#333" stroke-width="1.1"/><circle cx="1418.4" cy="753.2" r="6.95" fill="#fff"/><circle cx="1418.4" cy="753.2" r="6.5" fill="#333"/><path d="M1414.2 753.2H1422.6M1418.4 749V757.4" stroke="#fff" stroke-width="2.6"/><rect x="1472.1" y="742.8" width="15" height="13.5" fill="#fff" stroke="#3b4fa3" stroke-width="1.2"/><path d="M1476.90 742.2V756.9M1471.5 747.10H1487.7" stroke="#3b4fa3" stroke-width="1.1"/><path d="M1482.30 742.2V756.9M1471.5 752.00H1487.7" stroke="#3b4fa3" stroke-width="1.1"/><circle cx="1485.6" cy="753.2" r="6.95" fill="#fff"/><circle cx="1485.6" cy="753.2" r="6.5" fill="#3b4fa3"/><path d="M1481.4 753.2H1489.8M1485.6 749V757.4" stroke="#fff" stroke-width="2.6"/><rect x="1519.8" y="742.8" width="15" height="13.5" fill="#fff" stroke="#96603a" stroke-width="1.2"/><path d="M1524.60 742.2V756.9M1519.2 747.10H1535.4" stroke="#96603a" stroke-width="1.1"/><path d="M1530.00 742.2V756.9M1519.2 752.00H1535.4" stroke="#96603a" stroke-width="1.1"/><circle cx="1533.2" cy="753.2" r="6.95" fill="#fff"/><circle cx="1533.2" cy="753.2" r="6.5" fill="#96603a"/><path d="M1529 753.2H1537.4M1533.2 749V757.4" stroke="#fff" stroke-width="2.6"/><rect x="1101.2" y="784.2" width="16.6" height="16.6" rx="3.2" fill="#333"/><path d="M1104.5 792.8L1108 796.2L1114.6 789.1" fill="none" stroke="#fff" stroke-width="3.1"/><path d="M1143 781.4H1139.6V800.1H1143" fill="none" stroke="#068c45" stroke-width="2.0"/><path d="M1148.4 781.4H1151.8V800.1H1148.4" fill="none" stroke="#068c45" stroke-width="2.0"/><polyline points="1141.5,789.7 1143.5,793.7 1145.1,784.2 1147.4,796.8 1149.2,788.7 1150.2,791.4" fill="none" stroke="#068c45" stroke-width="1.4" stroke-linejoin="round"/><rect x="1102.6" y="820.18" width="13.8" height="13.8" rx="3" fill="#fff" stroke="#444" stroke-width="1.6"/><path d="M1143 815.98H1139.6V834.68H1143" fill="none" stroke="#068c45" stroke-width="2.0"/><path d="M1148.4 815.98H1151.8V834.68H1148.4" fill="none" stroke="#068c45" stroke-width="2.0"/><polyline points="1141.5,824.28 1143.5,828.28 1145.1,818.78 1147.4,831.38 1149.2,823.28 1150.2,825.98" fill="none" stroke="#068c45" stroke-width="1.4" stroke-linejoin="round"/><rect x="1101.2" y="853.36" width="16.6" height="16.6" rx="3.2" fill="#333"/><path d="M1104.5 861.96L1108 865.36L1114.6 858.26" fill="none" stroke="#fff" stroke-width="3.1"/><path d="M1143 850.56H1139.6V869.26H1143" fill="none" stroke="#068c45" stroke-width="2.0"/><path d="M1148.4 850.56H1151.8V869.26H1148.4" fill="none" stroke="#068c45" stroke-width="2.0"/><polyline points="1141.5,858.86 1143.5,862.86 1145.1,853.36 1147.4,865.96 1149.2,857.86 1150.2,860.56" fill="none" stroke="#068c45" stroke-width="1.4" stroke-linejoin="round"/><rect x="1102.6" y="889.34" width="13.8" height="13.8" rx="3" fill="#fff" stroke="#444" stroke-width="1.6"/><path d="M1143 885.14H1139.6V903.84H1143" fill="none" stroke="#068c45" stroke-width="2.0"/><path d="M1148.4 885.14H1151.8V903.84H1148.4" fill="none" stroke="#068c45" stroke-width="2.0"/><polyline points="1141.5,893.44 1143.5,897.44 1145.1,887.94 1147.4,900.54 1149.2,892.44 1150.2,895.14" fill="none" stroke="#068c45" stroke-width="1.4" stroke-linejoin="round"/><rect x="1101.2" y="922.52" width="16.6" height="16.6" rx="3.2" fill="#333"/><path d="M1104.5 931.12L1108 934.52L1114.6 927.42" fill="none" stroke="#fff" stroke-width="3.1"/><path d="M1143 919.72H1139.6V938.42H1143" fill="none" stroke="#068c45" stroke-width="2.0"/><path d="M1148.4 919.72H1151.8V938.42H1148.4" fill="none" stroke="#068c45" stroke-width="2.0"/><polyline points="1141.5,928.02 1143.5,932.02 1145.1,922.52 1147.4,935.12 1149.2,927.02 1150.2,929.72" fill="none" stroke="#068c45" stroke-width="1.4" stroke-linejoin="round"/><rect x="1102.6" y="958.5" width="13.8" height="13.8" rx="3" fill="#fff" stroke="#444" stroke-width="1.6"/><path d="M1143 954.3H1139.6V973H1143" fill="none" stroke="#068c45" stroke-width="2.0"/><path d="M1148.4 954.3H1151.8V973H1148.4" fill="none" stroke="#068c45" stroke-width="2.0"/><polyline points="1141.5,962.6 1143.5,966.6 1145.1,957.1 1147.4,969.7 1149.2,961.6 1150.2,964.3" fill="none" stroke="#068c45" stroke-width="1.4" stroke-linejoin="round"/></svg>
<span class="t" style="left:1166.50px;top:749px;font-size:17.6px;line-height:17.6px;color:#007960;letter-spacing:0.850px;-webkit-text-stroke:0.6px currentColor;">Start</span>
<span class="t" style="left:1167.30px;top:786px;font-size:17.6px;line-height:17.6px;color:#333;letter-spacing:-0.347px;">Apr 14, 2019 6:28 PM</span>
<span class="t" style="left:1167.30px;top:820px;font-size:17.6px;line-height:17.6px;color:#333;letter-spacing:-0.347px;">Apr 15, 2019 5:32 PM</span>
<span class="t" style="left:1167.30px;top:855px;font-size:17.6px;line-height:17.6px;color:#333;letter-spacing:-0.347px;">Apr 16, 2019 5:15 PM</span>
<span class="t" style="left:1167.30px;top:889px;font-size:17.6px;line-height:17.6px;color:#333;letter-spacing:-0.347px;">Apr 16, 2019 6:17 PM</span>
<span class="t" style="left:1167.30px;top:924px;font-size:17.6px;line-height:17.6px;color:#333;letter-spacing:-0.347px;">Apr 17, 2019 4:49 PM</span>
<span class="t" style="left:1167.30px;top:958px;font-size:17.6px;line-height:17.6px;color:#333;letter-spacing:-0.347px;">Apr 18, 2019 4:54 PM</span>
<div style="left:6px;top:980.2px;width:1560px;height:3.6px;background:#e2e2e2"></div>
<div style="left:1078px;top:729.8px;width:64px;height:254px;border:8px solid #ff0000"></div>
</div></body></html>
